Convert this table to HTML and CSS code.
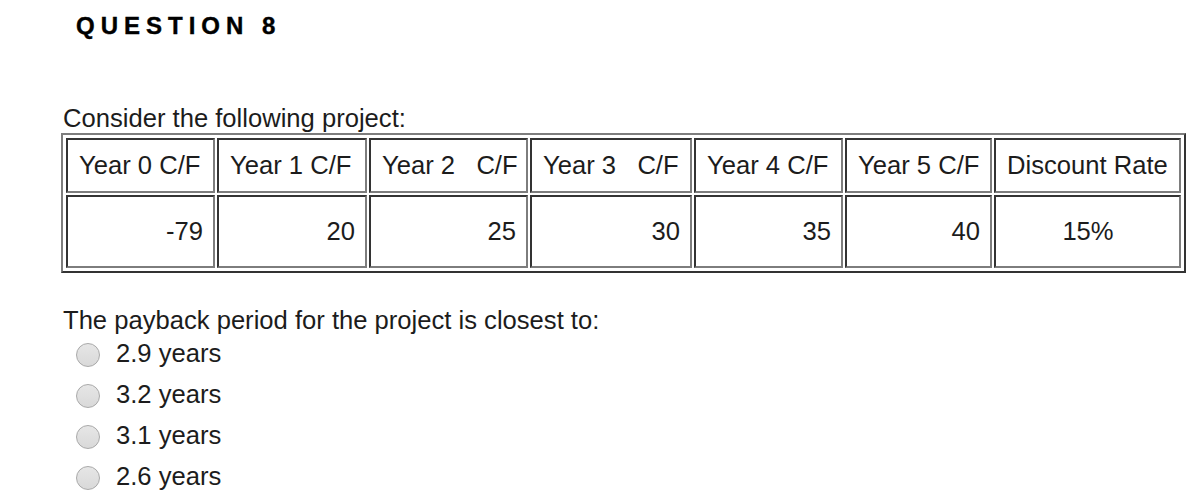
FILE: index.html
```html
<!DOCTYPE html>
<html>
<head>
<meta charset="utf-8">
<link rel="stylesheet" href="styles.css">
</head>
<body>
<div class="page">
  <h2 class="qtitle">QUESTION 8</h2>
  <div class="qbody">
    <p class="intro">Consider the following project:</p>
    <table class="cf">
      <colgroup>
        <col class="c1"><col class="c2"><col class="c3"><col class="c4"><col class="c5"><col class="c6"><col class="c7">
      </colgroup>
      <tr class="head">
        <td>Year 0 C/F</td>
        <td>Year 1 C/F</td>
        <td>Year 2&nbsp;&nbsp; C/F</td>
        <td>Year 3&nbsp;&nbsp; C/F</td>
        <td>Year 4 C/F</td>
        <td>Year 5 C/F</td>
        <td>Discount Rate</td>
      </tr>
      <tr class="vals">
        <td>-79</td>
        <td>20</td>
        <td>25</td>
        <td>30</td>
        <td>35</td>
        <td>40</td>
        <td class="center">15%</td>
      </tr>
    </table>
    <p class="prompt">The payback period for the project is closest to:</p>
    <ul class="options">
      <li><span class="radio"></span><span>2.9 years</span></li>
      <li><span class="radio"></span><span>3.2 years</span></li>
      <li><span class="radio"></span><span>3.1 years</span></li>
      <li><span class="radio"></span><span>2.6 years</span></li>
    </ul>
  </div>
</div>
</body>
</html>
```

FILE: styles.css
```css
html, body {
  margin: 0;
  padding: 0;
  background: #fff;
}
body {
  font-family: "Liberation Sans", Arial, sans-serif;
  color: #1c1c1c;
}
.page {
  padding: 11px 0 0 0;
}
.qtitle {
  margin: 0 0 0 76px;
  font-size: 24px;
  font-weight: bold;
  letter-spacing: 6px;
  line-height: 30px;
  color: #000;
  -webkit-text-stroke: 0.4px #000;
}
.qbody {
  margin: 63px 0 0 61px;
}
.intro {
  margin: 0 0 0 2px;
  font-size: 25.6px;
  line-height: 29px;
}
table.cf {
  border-collapse: separate;
  border-spacing: 2px;
  padding: 1px;
  table-layout: fixed;
  width: 1125px;
  border-style: solid;
  border-width: 2px;
  border-color: #7d7d7d #333 #333 #7d7d7d;
  font-size: 25.6px;
}
col.c1 { width: 149px; }
col.c2 { width: 150px; }
col.c3 { width: 159px; }
col.c4 { width: 162px; }
col.c5 { width: 149px; }
col.c6 { width: 147px; }
col.c7 { width: 187px; }
table.cf td {
  border-style: solid;
  border-width: 2px;
  border-color: #333 #7d7d7d #7d7d7d #333;
  white-space: nowrap;
  padding: 0 10px 0 11px;
  box-sizing: border-box;
  overflow: hidden;
}
tr.head td {
  height: 55px;
  text-align: left;
}
tr.vals td {
  height: 73px;
  text-align: right;
}
tr.vals td.center {
  text-align: center;
}
.prompt {
  margin: 33px 0 0 2px;
  font-size: 25.6px;
  line-height: 29px;
}
.options {
  list-style: none;
  margin: -2px 0 0 0;
  padding: 0 0 0 15px;
  font-size: 25.6px;
}
.options li {
  display: flex;
  align-items: center;
  height: 41px;
  gap: 16px;
}
.radio {
  display: inline-block;
  width: 22px;
  height: 22px;
  border-radius: 50%;
  border: 1px solid #a9a9a9;
  background: linear-gradient(#e6e6e6, #d9d9d9);
  flex: none;
  margin-top: 2px;
}
```
